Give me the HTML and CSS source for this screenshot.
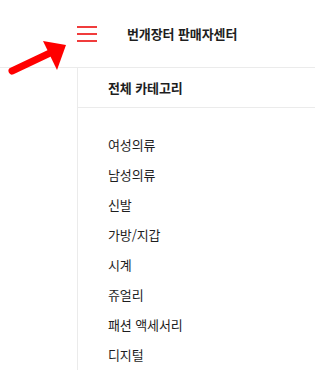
FILE: index.html
```html
<!DOCTYPE html>
<html lang="ko">
<head>
    <meta charset="UTF-8">
    <meta name="viewport" content="width=device-width, initial-scale=1.0">
    <title>번개장터 판매자센터</title>
    <link rel="stylesheet" href="styles.css">
</head>
<body>
    <div class="topbar">
        <button class="menu-btn" aria-label="메뉴">
            <span></span><span></span><span></span>
        </button>
        <h1 class="title">번개장터 판매자센터</h1>
    </div>

    <div class="main">
        <div class="side"></div>
        <div class="panel">
            <div class="panel-head">전체 카테고리</div>
            <ul class="category-list">
                <li>여성의류</li>
                <li>남성의류</li>
                <li>신발</li>
                <li>가방/지갑</li>
                <li>시계</li>
                <li>쥬얼리</li>
                <li>패션 액세서리</li>
                <li>디지털</li>
            </ul>
        </div>
    </div>

    <!-- pointer arrow over the menu button -->
    <svg class="pointer" width="80" height="85" viewBox="0 0 80 85">
        <line x1="12" y1="71" x2="50" y2="53" stroke="#ff0000" stroke-width="7" stroke-linecap="round"/>
        <polygon points="66,45 43,41 57,70" fill="#ff0000"/>
    </svg>
</body>
</html>
```

FILE: styles.css
```css
body {
    margin: 0;
    font-family: "Noto Sans CJK KR", "Noto Sans", sans-serif;
    color: #1e1e1e;
    background: #fff;
    position: relative;
}

.topbar {
    height: 67px;
    display: flex;
    align-items: center;
    padding-left: 77px;
}

.menu-btn {
    width: 20px;
    height: 16px;
    padding: 0;
    border: none;
    background: none;
    display: flex;
    flex-direction: column;
    justify-content: space-between;
    cursor: pointer;
}

.menu-btn span {
    display: block;
    height: 2px;
    background: #f03c3c;
}

.title {
    margin: 0 0 0 30px;
    font-size: 13px;
    font-weight: 700;
    letter-spacing: -0.1px;
}

.main {
    display: flex;
    border-top: 1px solid #ebebeb;
}

.side {
    width: 77px;
}

.panel {
    flex: 1;
    border-left: 1px solid #ebebeb;
}

.panel-head {
    height: 39px;
    line-height: 39px;
    padding-left: 30px;
    border-bottom: 1px solid #ebebeb;
    font-size: 13px;
    font-weight: 700;
    letter-spacing: -0.1px;
}

.category-list {
    list-style: none;
    margin: 0;
    padding: 22px 0 0 30px;
}

.category-list li {
    height: 30px;
    line-height: 30px;
    font-size: 13px;
    letter-spacing: -0.1px;
}

.pointer {
    position: absolute;
    left: 0;
    top: 0;
}
```
